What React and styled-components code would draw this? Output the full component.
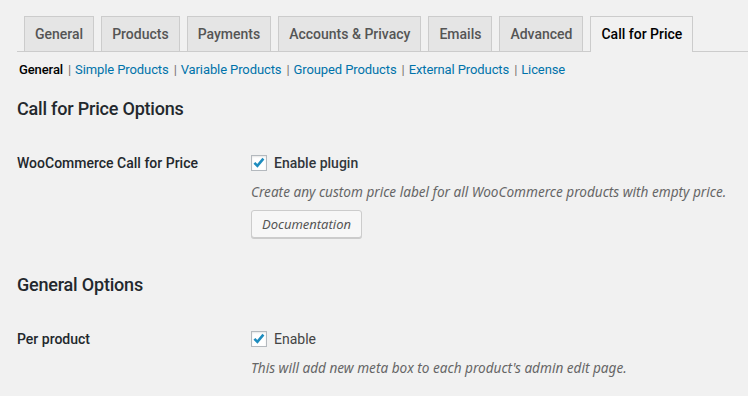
import React from "react";
import styled, { createGlobalStyle } from "styled-components";

const Global = createGlobalStyle`
  html, body { margin: 0; padding: 0; background: #f1f1f1; }
  body { font-family: Roboto, "Liberation Sans", sans-serif; color: #444; font-size: 13px; }
  * { box-sizing: border-box; }
`;

const Page = styled.div`
  padding: 16px 0 0 17px;
  width: 748px;
  height: 396px;
  overflow: hidden;
`;

const TabBar = styled.nav`
  display: flex;
  border-bottom: 1px solid #ccc;
  padding-left: 7px;
  gap: 7px;
`;

const Tab = styled.a`
  display: block;
  padding: 5px 10px;
  line-height: 24px;
  font-size: 14px;
  font-weight: 500;
  border: 1px solid #ccc;
  border-bottom: none;
  background: ${(p) => (p.$active ? "#f1f1f1" : "#e5e5e5")};
  color: ${(p) => (p.$active ? "#000" : "#555")};
  margin-bottom: ${(p) => (p.$active ? "-1px" : "0")};
  padding-bottom: ${(p) => (p.$active ? "6px" : "5px")};
  white-space: nowrap;
`;

const SubNav = styled.ul`
  display: flex;
  list-style: none;
  margin: 8px 0 0 2px;
  padding: 0;
  font-size: 13px;
  line-height: 20px;
  letter-spacing: -0.1px;
  color: #666;
`;

const SubItem = styled.li`
  white-space: nowrap;
`;

const SubLink = styled.a`
  color: ${(p) => (p.$current ? "#000" : "#0073aa")};
  font-weight: ${(p) => (p.$current ? 500 : 400)};
  text-decoration: none;
`;

const Sep = styled.span`
  color: #7a7370;
  padding: 0 4px 0 5px;
`;

const Heading = styled.h2`
  margin: ${(p) => p.$mt} 0 0 0;
  font-size: 18px;
  font-weight: 500;
  line-height: 24px;
  letter-spacing: -0.2px;
  color: #23282d;
`;

const Row = styled.div`
  display: grid;
  grid-template-columns: 234px 1fr;
  padding-top: 20px;
  margin-top: 13px;
`;

const Label = styled.div`
  font-size: 14px;
  font-weight: 500;
  line-height: 18px;
  color: #23282d;
`;

const Field = styled.div`
  display: flex;
  flex-direction: column;
  align-items: flex-start;
  margin-top: -1px;
`;

const CheckLine = styled.label`
  display: flex;
  align-items: center;
  gap: 7px;
  font-size: 14px;
  line-height: 20px;
  font-weight: ${(p) => (p.$strong ? 500 : 400)};
  color: ${(p) => (p.$strong ? "#32373c" : "#444")};
`;

const Box = styled.span`
  width: 16px;
  height: 16px;
  border: 1px solid #b4b9be;
  background: #fff;
  box-shadow: inset 0 1px 2px rgba(0, 0, 0, 0.1);
  display: flex;
  align-items: center;
  justify-content: center;
`;

const Desc = styled.p`
  margin: 9px 0 0 0;
  font-family: "Noto Sans", "Open Sans", sans-serif;
  font-size: 13.6px;
  line-height: 20px;
  font-style: italic;
  color: #666;
`;

const Button = styled.button`
  margin-top: 8px;
  height: 28px;
  padding: 0 10px 1px;
  font-family: "Noto Sans", "Open Sans", sans-serif;
  font-size: 13px;
  font-style: italic;
  color: #555;
  background: #f7f7f7;
  border: 1px solid #ccc;
  border-radius: 3px;
  box-shadow: 0 1px 0 #ccc;
  cursor: pointer;
`;

const Check = () => (
  <svg width="14" height="14" viewBox="0 0 14 14">
    <path d="M2.4 6.8 L5.4 9.9 L11.4 2.6" fill="none" stroke="#1e8cbe" strokeWidth="2.6" strokeLinejoin="miter" />
  </svg>
);

const tabs = ["General", "Products", "Payments", "Accounts & Privacy", "Emails", "Advanced", "Call for Price"];
const subs = ["General", "Simple Products", "Variable Products", "Grouped Products", "External Products", "License"];

export default function App() {
  return (
    <>
      <Global />
      <Page>
        <TabBar>
          {tabs.map((t) => (
            <Tab key={t} $active={t === "Call for Price"}>{t}</Tab>
          ))}
        </TabBar>
        <SubNav>
          {subs.map((s, i) => (
            <SubItem key={s}>
              {i > 0 && <Sep>|</Sep>}
              <SubLink $current={i === 0}>{s}</SubLink>
            </SubItem>
          ))}
        </SubNav>
        <Heading $mt="17px">Call for Price Options</Heading>
        <Row>
          <Label>WooCommerce Call for Price</Label>
          <Field>
            <CheckLine $strong>
              <Box><Check /></Box>
              Enable plugin
            </CheckLine>
            <Desc>Create any custom price label for all WooCommerce products with empty price.</Desc>
            <Button>Documentation</Button>
          </Field>
        </Row>
        <Heading $mt="35px">General Options</Heading>
        <Row>
          <Label>Per product</Label>
          <Field>
            <CheckLine>
              <Box><Check /></Box>
              Enable
            </CheckLine>
            <Desc>This will add new meta box to each product's admin edit page.</Desc>
          </Field>
        </Row>
      </Page>
    </>
  );
}
